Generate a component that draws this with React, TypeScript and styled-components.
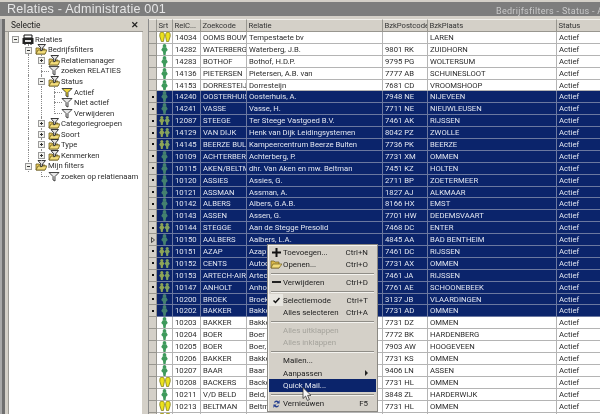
import React from 'react'
import styled, { createGlobalStyle } from 'styled-components'

const GlobalStyle = createGlobalStyle`
  html, body { margin: 0; padding: 0; background: #d4d0c8; }
  * { box-sizing: border-box; }
`

const Window = styled.div`
  position: relative;
  width: 600px;
  height: 414px;
  overflow: hidden;
  display: flex;
  flex-direction: column;
  background: #d4d0c8;
  font-family: Roboto, "Liberation Sans", Arial, sans-serif;
  font-size: 7.7px;
  color: #222;
  filter: blur(0.25px);
`

const TitleBar = styled.div`
  height: 14px;
  flex: none;
  margin: 2px 0 3px;
  padding: 0 0 0 7px;
  display: flex;
  align-items: center;
  justify-content: space-between;
  background: #7d7d7d;
  overflow: hidden;
  white-space: nowrap;
`

const AppTitle = styled.div`
  color: #e6e6e6;
  font-family: "Liberation Sans", Arial, sans-serif;
  font-size: 12.6px;
  letter-spacing: 0.2px;
`

const Breadcrumb = styled.div`
  color: #c9c9c9;
  font-size: 9px;
  letter-spacing: 0.3px;
  width: 104px;
  margin-top: 3px;
  overflow: hidden;
`

const Body = styled.div`
  flex: 1;
  min-height: 0;
  display: flex;
`

const Rail = styled.div`
  width: 5px;
  flex: none;
  background: linear-gradient(90deg, #a9a9a9 0 2px, #6f6f6f 2px 5px);
`

const SidePanel = styled.div`
  width: 138px;
  flex: none;
  display: flex;
  flex-direction: column;
`

const PanelHead = styled.div`
  height: 13px;
  flex: none;
  padding: 0 4px 0 6px;
  display: flex;
  align-items: center;
  justify-content: space-between;
  color: #222;
  font-size: 8.4px;
  border-bottom: 1px solid #9c9a94;
`

const CloseMark = styled.span`
  font-size: 9px;
  font-weight: 700;
  color: #222;
`

const TreeBox = styled.div`
  flex: 1;
  margin: 0 1px 0 3px;
  padding-top: 2px;
  background: #fff;
  border-left: 1px solid #9c9a94;
  overflow: hidden;
`

const TreeRow = styled.div`
  height: 10.55px;
  display: flex;
  align-items: center;
  white-space: nowrap;
  color: #2c2c2c;
`

const TreeCell = styled.div`
  position: relative;
  width: 13px;
  height: 100%;
  flex: none;
`

const VLine = styled.i<{ $short?: boolean }>`
  position: absolute;
  left: 6px;
  top: -1px;
  height: ${p => (p.$short ? '7px' : '12px')};
  border-left: 1px dotted #8b8b8b;
`

const HLine = styled.i`
  position: absolute;
  left: 6px;
  top: 5px;
  width: 8px;
  border-top: 1px dotted #8b8b8b;
`

const Expander = styled.b`
  position: absolute;
  left: 3px;
  top: 2px;
  width: 7px;
  height: 7px;
  background: #f2f2ee;
  border: 1px solid #9a9a9a;
  &::before {
    content: '';
    position: absolute;
    left: 1px;
    top: 2px;
    width: 3px;
    height: 1px;
    background: #333;
  }
`

const ExpanderPlus = styled(Expander)`
  &::after {
    content: '';
    position: absolute;
    left: 2px;
    top: 1px;
    width: 1px;
    height: 3px;
    background: #333;
  }
`

const NodeIcon = styled.svg`
  width: 12px;
  height: 11px;
  flex: none;
`

const NodeLabel = styled.span`
  margin-left: 1px;
`

const Splitter = styled.div`
  width: 5px;
  flex: none;
`

const Grid = styled.div`
  flex: 1;
  min-width: 0;
  overflow: hidden;
  border-left: 1px solid #8a8a8a;
`

const columns = '8px 16px 28px 46px 136px 45px 129px 60px'

const HeadRow = styled.div`
  display: grid;
  grid-template-columns: ${columns};
  height: 13px;
`

const HeadCell = styled.div`
  padding: 0 0 0 1.5px;
  display: flex;
  align-items: center;
  white-space: nowrap;
  overflow: hidden;
  background: #d4d0c8;
  color: #333;
  letter-spacing: -0.05px;
  border-right: 1px solid #98968f;
  border-bottom: 1px solid #98968f;
  border-top: 1px solid #f2f1ec;
`

const DataRow = styled.div<{ $sel?: boolean }>`
  display: grid;
  grid-template-columns: ${columns};
  height: 11.9px;
  background: ${p => (p.$sel ? '#0b246b' : '#fff')};
  color: ${p => (p.$sel ? '#e2e6f0' : '#2a2a2a')};
`

const Cell = styled.div<{ $sel?: boolean }>`
  padding-left: 2px;
  display: flex;
  align-items: center;
  white-space: nowrap;
  overflow: hidden;
  border-right: 1px solid ${p => (p.$sel ? '#6b78a0' : '#b4b4b4')};
  border-bottom: 1px solid ${p => (p.$sel ? '#6b78a0' : '#b4b4b4')};
`

const Indicator = styled.div`
  display: flex;
  align-items: center;
  justify-content: center;
  background: #d4d0c8;
  border-right: 1px solid #98968f;
  border-bottom: 1px solid #98968f;
`

const Dot = styled.span`
  width: 2px;
  height: 2px;
  background: #111;
`

const SrtCell = styled.div<{ $sel?: boolean }>`
  display: flex;
  align-items: center;
  justify-content: center;
  background: ${p => (p.$sel ? '#0b246b' : '#fff')};
  border-right: 1px solid ${p => (p.$sel ? '#6b78a0' : '#b4b4b4')};
  border-bottom: 1px solid ${p => (p.$sel ? '#6b78a0' : '#b4b4b4')};
  overflow: hidden;
`

const Menu = styled.div`
  position: absolute;
  left: 267px;
  top: 244px;
  width: 111px;
  height: 168px;
  padding: 1px 1px;
  background: #d4d0c8;
  border: 1px solid #8b8983;
  box-shadow: inset 1px 1px 0 #f4f3ef;
  color: #222;
  font-size: 7.9px;
`

const MenuItem = styled.div<{ $active?: boolean; $off?: boolean }>`
  height: 12.3px;
  display: flex;
  align-items: center;
  padding-right: 8px;
  white-space: nowrap;
  background: ${p => (p.$active ? '#0b246b' : 'transparent')};
  color: ${p => (p.$active ? '#e6e9f2' : p.$off ? '#a5a39c' : '#222')};
`

const MenuGlyph = styled.span<{ $checked?: boolean }>`
  width: 14px;
  height: 12px;
  flex: none;
  display: flex;
  align-items: center;
  justify-content: center;
  background: ${p => (p.$checked ? '#e8e6e0' : 'transparent')};
`

const MenuText = styled.span`
  flex: 1;
`

const MenuSep = styled.div`
  height: 1px;
  margin: 2px 2px 2.7px;
  background: #8f8d87;
  box-shadow: 0 1px 0 #f4f3ef;
`

const SubArrow = styled.span`
  width: 0;
  height: 0;
  border-left: 3px solid #222;
  border-top: 3px solid transparent;
  border-bottom: 3px solid transparent;
`

const Pointer = styled.svg`
  position: absolute;
  left: 302px;
  top: 387px;
  width: 10px;
  height: 15px;
`

const FolderFilter = () => (
  <NodeIcon viewBox="0 0 12 11">
    <path d="M1 4h3l1 1h5v5H1z" fill="#e8c85a" stroke="#6a5a1c" strokeWidth="0.8" />
    <path d="M1 10l2-4h9l-2 4z" fill="#f2dc7a" stroke="#6a5a1c" strokeWidth="0.8" />
    <path d="M3 0.5h7.5L7.6 4v2L5.8 7V4z" fill="#e4e4e4" stroke="#222" strokeWidth="0.9" />
  </NodeIcon>
)

const Funnel = ({ active }: { active?: boolean }) => (
  <NodeIcon viewBox="0 0 12 11">
    <path d="M1 1.5h10L7 5.5v4.5L5 9V5.5z" fill={active ? '#f0d83a' : '#e6e6e6'} stroke="#333" strokeWidth="0.9" />
  </NodeIcon>
)

const CardFile = () => (
  <NodeIcon viewBox="0 0 12 11">
    <path d="M2 1h8v3H2z" fill="#fff" stroke="#111" />
    <path d="M0.5 4h11v6h-11z" fill="#222" />
    <path d="M3 6h6v2H3z" fill="#ddd" />
    <path d="M3 10v1M9 10v1" stroke="#111" />
  </NodeIcon>
)

type Guide = '' | 'v' | 'tee' | 'end' | 'plus' | 'minus' | 'minus-first'

const GuideCell = ({ kind }: { kind: Guide }) => (
  <TreeCell>
    {(kind === 'v' || kind === 'tee' || kind === 'plus' || kind === 'minus') && <VLine />}
    {kind === 'end' && <VLine $short />}
    {(kind === 'tee' || kind === 'end') && <HLine />}
    {kind === 'plus' && <ExpanderPlus />}
    {(kind === 'minus' || kind === 'minus-first') && <Expander />}
  </TreeCell>
)

const tree: { guides: Guide[]; icon: React.ReactNode; label: string }[] = [
  { guides: ['minus-first'], icon: <CardFile />, label: 'Relaties' },
  { guides: ['', 'minus'], icon: <FolderFilter />, label: 'Bedrijfsfilters' },
  { guides: ['', 'v', 'plus'], icon: <FolderFilter />, label: 'Relatiemanager' },
  { guides: ['', 'v', 'tee'], icon: <Funnel />, label: 'zoeken RELATIES' },
  { guides: ['', 'v', 'minus'], icon: <FolderFilter />, label: 'Status' },
  { guides: ['', 'v', 'v', 'tee'], icon: <Funnel active />, label: 'Actief' },
  { guides: ['', 'v', 'v', 'tee'], icon: <Funnel />, label: 'Niet actief' },
  { guides: ['', 'v', 'v', 'end'], icon: <Funnel />, label: 'Verwijderen' },
  { guides: ['', 'v', 'plus'], icon: <FolderFilter />, label: 'Categoriegroepen' },
  { guides: ['', 'v', 'plus'], icon: <FolderFilter />, label: 'Soort' },
  { guides: ['', 'v', 'plus'], icon: <FolderFilter />, label: 'Type' },
  { guides: ['', 'v', 'plus'], icon: <FolderFilter />, label: 'Kenmerken' },
  { guides: ['', 'minus'], icon: <FolderFilter />, label: 'Mijn filters' },
  { guides: ['', '', 'end'], icon: <Funnel />, label: 'zoeken op relatienaam' },
]

const Person = ({ x, color }: { x: number; color: string }) => (
  <g transform={`translate(${x} 0)`}>
    <circle cx="3" cy="1.8" r="1.7" fill={color} />
    <path d="M1.4 3h3.2L6 5.4 4.4 7 4 10H2L1.6 7 0 5.4z" fill={color} />
  </g>
)

const SrtIcon = ({ kind, sel }: { kind: 'g' | 'p' | 'y'; sel?: boolean }) => {
  if (kind === 'g')
    return (
      <svg width="7" height="11" viewBox="0 0 6 10">
        <Person x={0} color={sel ? '#44806f' : '#3f9a5c'} />
      </svg>
    )
  if (kind === 'p')
    return (
      <svg width="11" height="9" viewBox="0 0 12 10">
        <Person x={0} color="#8ea455" />
        <Person x={6} color="#7fa060" />
      </svg>
    )
  return (
    <svg width="12" height="10" viewBox="0 0 12 10">
      <path d="M3 0c2 0 2.6 2 2.4 4.4L4.4 9.6H2.4L.8 4.4C.6 2 1 0 3 0z" fill="#ece21e" stroke="#6f6a10" strokeWidth="0.7" />
      <path d="M9 0c2 0 2.4 2 2.2 4.4L9.6 9.6H7.6L6.6 4.4C6.4 2 7 0 9 0z" fill="#ece21e" stroke="#6f6a10" strokeWidth="0.7" />
    </svg>
  )
}

type Rec = [('g' | 'p' | 'y'), string, string, string, string, string, boolean?, boolean?]

const rows: Rec[] = [
  ['y', '14034', 'OOMS BOUW', 'Tempestaete bv', '', 'LAREN'],
  ['g', '14282', 'WATERBERG', 'Waterberg, J.B.', '9801 RK', 'ZUIDHORN'],
  ['g', '14283', 'BOTHOF', 'Bothof, H.D.P.', '9795 PG', 'WOLTERSUM'],
  ['g', '14136', 'PIETERSEN', 'Pietersen, A.B. van', '7777 AB', 'SCHUINESLOOT'],
  ['g', '14153', 'DORRESTEIJN', 'Dorresteijn', '7681 CD', 'VROOMSHOOP'],
  ['g', '14240', 'OOSTERHUIS', 'Oosterhuis, A.', '7948 NE', 'NIJEVEEN', true],
  ['g', '14241', 'VASSE', 'Vasse, H.', '7711 NE', 'NIEUWLEUSEN', true],
  ['p', '12087', 'STEEGE', 'Ter Steege Vastgoed B.V.', '7461 AK', 'RIJSSEN', true],
  ['p', '14129', 'VAN DIJK', 'Henk van Dijk Leidingsystemen', '8042 PZ', 'ZWOLLE', true],
  ['p', '14145', 'BEERZE BUL', 'Kampeercentrum Beerze Bulten', '7736 PK', 'BEERZE', true],
  ['g', '10109', 'ACHTERBERG', 'Achterberg, P.', '7731 XM', 'OMMEN', true],
  ['g', '10115', 'AKEN/BELTM', 'dhr. Van Aken en mw. Beltman', '7451 KZ', 'HOLTEN', true],
  ['g', '10120', 'ASSIES', 'Assies, G.', '2711 BP', 'ZOETERMEER', true],
  ['g', '10121', 'ASSMAN', 'Assman, A.', '1827 AJ', 'ALKMAAR', true],
  ['g', '10142', 'ALBERS', 'Albers, G.A.B.', '8166 HX', 'EMST', true],
  ['g', '10143', 'ASSEN', 'Assen, G.', '7701 HW', 'DEDEMSVAART', true],
  ['p', '10144', 'STEGGE', 'Aan de Stegge Presolid', '7468 DC', 'ENTER', true],
  ['g', '10150', 'AALBERS', 'Aalbers, L.A.', '4845 AA', 'BAD BENTHEIM', true, true],
  ['p', '10151', 'AZAP', 'Azap', '7461 DC', 'RIJSSEN', true],
  ['p', '10152', 'CENTS', 'Autoc', '7731 AX', 'OMMEN', true],
  ['p', '10153', 'ARTECH-AIR', 'Artec', '7461 JA', 'RIJSSEN', true],
  ['p', '10147', 'ANHOLT', 'Anhol', '7761 AE', 'SCHOONEBEEK', true],
  ['g', '10200', 'BROEK', 'Broek', '3137 JB', 'VLAARDINGEN', true],
  ['g', '10202', 'BAKKER', 'Bakke', '7731 AD', 'OMMEN', true],
  ['g', '10203', 'BAKKER', 'Bakke', '7731 DZ', 'OMMEN'],
  ['g', '10204', 'BOER', 'Boer', '7772 BK', 'HARDENBERG'],
  ['g', '10205', 'BOER', 'Boer,', '7903 AW', 'HOOGEVEEN'],
  ['g', '10206', 'BAKKER', 'Bakke', '7731 KS', 'OMMEN'],
  ['g', '10207', 'BAAR', 'Baar', '9406 LN', 'ASSEN'],
  ['y', '10208', 'BACKERS', 'Backe', '7731 HL', 'OMMEN'],
  ['g', '10211', 'V/D BELD', 'Beld,', '3848 ZL', 'HARDERWIJK'],
  ['y', '10213', 'BELTMAN', 'Beltm', '7731 HL', 'OMMEN'],
  ['y', '', '', '', '', ''],
]

export default function App() {
  return (
    <>
      <GlobalStyle />
      <Window>
        <TitleBar>
          <AppTitle>Relaties - Administratie 001</AppTitle>
          <Breadcrumb>Bedrijfsfilters - Status - Actief</Breadcrumb>
        </TitleBar>
        <Body>
          <Rail />
          <SidePanel>
            <PanelHead>
              <span>Selectie</span>
              <CloseMark>✕</CloseMark>
            </PanelHead>
            <TreeBox>
              {tree.map(n => (
                <TreeRow key={n.label}>
                  {n.guides.map((g, i) => (
                    <GuideCell key={i} kind={g} />
                  ))}
                  {n.icon}
                  <NodeLabel>{n.label}</NodeLabel>
                </TreeRow>
              ))}
            </TreeBox>
          </SidePanel>
          <Splitter />
          <Grid>
            <HeadRow>
              <HeadCell />
              <HeadCell>Srt</HeadCell>
              <HeadCell>RelC...</HeadCell>
              <HeadCell>Zoekcode</HeadCell>
              <HeadCell>Relatie</HeadCell>
              <HeadCell>BzkPostcode</HeadCell>
              <HeadCell>BzkPlaats</HeadCell>
              <HeadCell>Status</HeadCell>
            </HeadRow>
            {rows.map((r, i) => {
              const sel = !!r[6]
              return (
                <DataRow key={i} $sel={sel}>
                  <Indicator>
                    {r[7] ? (
                      <svg width="4" height="6" viewBox="0 0 4 6"><path d="M0.5 0.5L3.5 3 0.5 5.5z" fill="#d4d0c8" stroke="#222" strokeWidth="0.8" /></svg>
                    ) : sel ? <Dot /> : null}
                  </Indicator>
                  <SrtCell $sel={sel}>
                    <SrtIcon kind={r[0]} sel={sel} />
                  </SrtCell>
                  <Cell $sel={sel}>{r[1]}</Cell>
                  <Cell $sel={sel}>{r[2]}</Cell>
                  <Cell $sel={sel}>{r[3]}</Cell>
                  <Cell $sel={sel}>{r[4]}</Cell>
                  <Cell $sel={sel}>{r[5]}</Cell>
                  <Cell $sel={sel}>{r[1] ? 'Actief' : ''}</Cell>
                </DataRow>
              )
            })}
          </Grid>
        </Body>
        <Menu>
          <MenuItem>
            <MenuGlyph>
              <svg width="9" height="9" viewBox="0 0 9 9"><path d="M3.5 0h2v3.5H9v2H5.5V9h-2V5.5H0v-2h3.5z" fill="#111" /></svg>
            </MenuGlyph>
            <MenuText>Toevoegen...</MenuText>Ctrl+N
          </MenuItem>
          <MenuItem>
            <MenuGlyph>
              <svg width="12" height="10" viewBox="0 0 12 10"><path d="M1 2h3l1 1h4v6H1z" fill="#d9b84a" stroke="#6a5a1c" strokeWidth="0.7" /><path d="M1 9l2-4h9l-3 4z" fill="#f2dc7a" stroke="#6a5a1c" strokeWidth="0.7" /></svg>
            </MenuGlyph>
            <MenuText>Openen...</MenuText>Ctrl+O
          </MenuItem>
          <MenuSep />
          <MenuItem>
            <MenuGlyph>
              <svg width="9" height="3" viewBox="0 0 9 3"><path d="M0 0h9v2H0z" fill="#222" /></svg>
            </MenuGlyph>
            <MenuText>Verwijderen</MenuText>Ctrl+D
          </MenuItem>
          <MenuSep />
          <MenuItem>
            <MenuGlyph $checked>
              <svg width="7" height="7" viewBox="0 0 7 7"><path d="M0.5 3.5l2 2 4-4.5" fill="none" stroke="#111" strokeWidth="1.5" /></svg>
            </MenuGlyph>
            <MenuText>Selectiemode</MenuText>Ctrl+T
          </MenuItem>
          <MenuItem>
            <MenuGlyph />
            <MenuText>Alles selecteren</MenuText>Ctrl+A
          </MenuItem>
          <MenuSep />
          <MenuItem $off>
            <MenuGlyph />
            <MenuText>Alles uitklappen</MenuText>
          </MenuItem>
          <MenuItem $off>
            <MenuGlyph />
            <MenuText>Alles inklappen</MenuText>
          </MenuItem>
          <MenuSep />
          <MenuItem>
            <MenuGlyph />
            <MenuText>Mailen...</MenuText>
          </MenuItem>
          <MenuItem>
            <MenuGlyph />
            <MenuText>Aanpassen</MenuText>
            <SubArrow />
          </MenuItem>
          <MenuItem $active>
            <MenuGlyph />
            <MenuText>Quick Mail...</MenuText>
          </MenuItem>
          <MenuSep />
          <MenuItem>
            <MenuGlyph>
              <svg width="7" height="10" viewBox="0 0 7 10"><path d="M1 3.5C1.5 1.5 4 0.8 5.5 2.4L6.6 1v3.4H3.4l1-1C3.6 2.6 2.4 2.8 2 3.8zM6 6.5C5.5 8.5 3 9.2 1.5 7.6L0.4 9V5.6h3.2l-1 1C3.4 7.4 4.6 7.2 5 6.2z" fill="#27408f" /></svg>
            </MenuGlyph>
            <MenuText>Vernieuwen</MenuText>F5
          </MenuItem>
        </Menu>
        <Pointer viewBox="0 0 10 15">
          <path d="M1 0.5v11l2.6-2.4 1.8 4.4 2-.9-1.8-4.2h3.4z" fill="#f4f4f4" stroke="#333" strokeWidth="0.8" />
        </Pointer>
      </Window>
    </>
  )
}
